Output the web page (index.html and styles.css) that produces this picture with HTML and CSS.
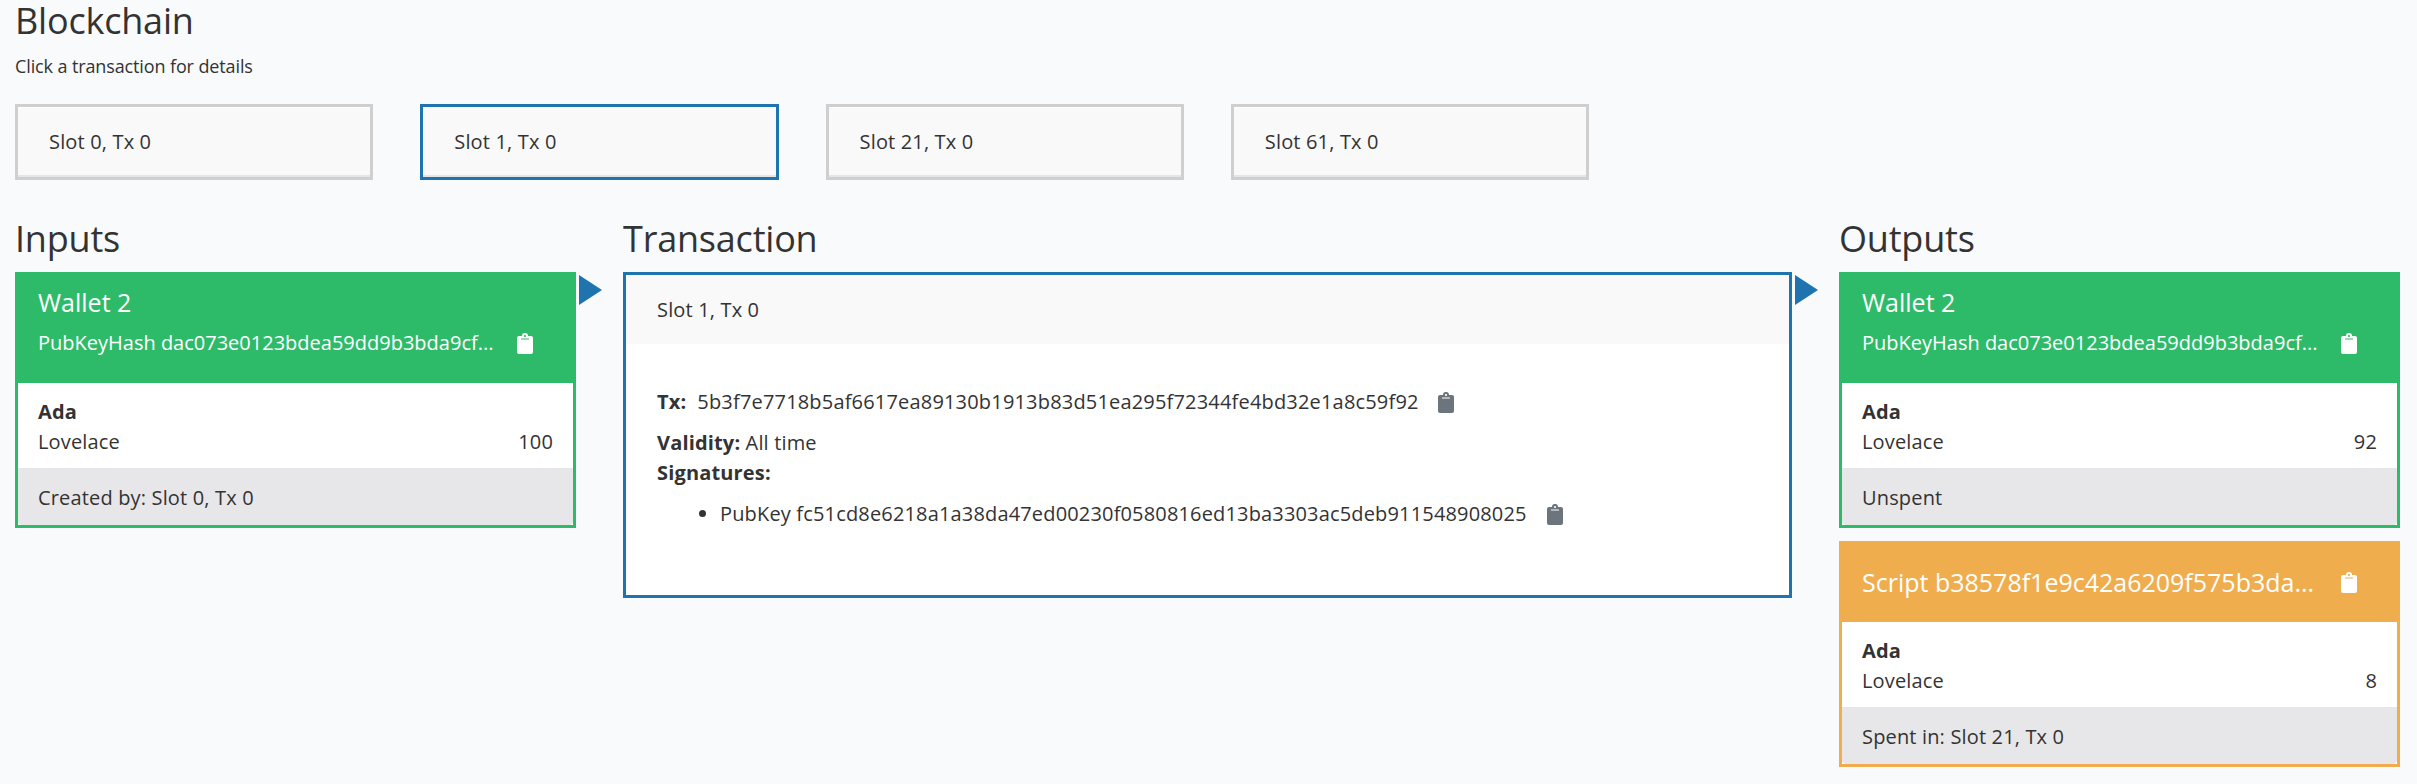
FILE: index.html
```html
<!DOCTYPE html>
<html lang="en">
<head>
<meta charset="utf-8">
<title>Blockchain</title>
<link rel="stylesheet" href="styles.css">
</head>
<body>
<svg class="defs" width="0" height="0"><symbol id="clip" viewBox="0 0 16 21"><path fill-rule="evenodd" d="M2 3H4.9A3.1 3.1 0 0 1 11.1 3H14A2 2 0 0 1 16 5V19A2 2 0 0 1 14 21H2A2 2 0 0 1 0 19V5A2 2 0 0 1 2 3ZM8 1.9A1.1 1.1 0 1 0 8 4.1A1.1 1.1 0 1 0 8 1.9ZM4 5.6V6.6H12V5.6Z"/></symbol></svg>
<main class="chain">
  <h2 class="title">Blockchain</h2>
  <p class="hint">Click a transaction for details</p>
  <div class="slots">
    <div class="slot">Slot 0, Tx 0</div>
    <div class="slot active">Slot 1, Tx 0</div>
    <div class="slot">Slot 21, Tx 0</div>
    <div class="slot">Slot 61, Tx 0</div>
  </div>
  <div class="detail">
    <section class="column">
      <h2 class="title">Inputs</h2>
      <div class="entry wallet">
        <div class="entry-head">
          <div class="name">Wallet 2</div>
          <div class="owner"><span class="hash">PubKeyHash dac073e0123bdea59dd9b3bda9cf...</span><svg class="clip"><use href="#clip"/></svg></div>
        </div>
        <div class="balance"><b>Ada</b><div class="amount"><span>Lovelace</span><span>100</span></div></div>
        <div class="entry-foot">Created by: Slot 0, Tx 0</div>
        <i class="arrow"></i>
      </div>
    </section>
    <section class="column">
      <h2 class="title">Transaction</h2>
      <div class="transaction">
        <div class="tx-head">Slot 1, Tx 0</div>
        <div class="tx-body">
          <div class="tx-id"><b>Tx:</b><span class="hash">5b3f7e7718b5af6617ea89130b1913b83d51ea295f72344fe4bd32e1a8c59f92</span><svg class="clip"><use href="#clip"/></svg></div>
          <div><b>Validity:</b> All time</div>
          <div><b>Signatures:</b></div>
          <ul class="signatures"><li><div class="key"><span class="hash">PubKey fc51cd8e6218a1a38da47ed00230f0580816ed13ba3303ac5deb911548908025</span><svg class="clip"><use href="#clip"/></svg></div></li></ul>
        </div>
        <i class="arrow"></i>
      </div>
    </section>
    <section class="column">
      <h2 class="title">Outputs</h2>
      <div class="entry wallet">
        <div class="entry-head">
          <div class="name">Wallet 2</div>
          <div class="owner"><span class="hash">PubKeyHash dac073e0123bdea59dd9b3bda9cf...</span><svg class="clip"><use href="#clip"/></svg></div>
        </div>
        <div class="balance"><b>Ada</b><div class="amount"><span>Lovelace</span><span>92</span></div></div>
        <div class="entry-foot">Unspent</div>
      </div>
      <div class="entry script">
        <div class="entry-head">
          <div class="owner"><span class="hash name">Script b38578f1e9c42a6209f575b3da...</span><svg class="clip"><use href="#clip"/></svg></div>
        </div>
        <div class="balance"><b>Ada</b><div class="amount"><span>Lovelace</span><span>8</span></div></div>
        <div class="entry-foot">Spent in: Slot 21, Tx 0</div>
      </div>
    </section>
  </div>
</main>
</body>
</html>
```
FILE: styles.css
```css
* { box-sizing: border-box; }
body {
  margin: 0;
  background: #f8fafc;
  color: #333;
  font: 20px/30px "Open Sans", sans-serif;
  letter-spacing: .16px;
}
.defs { display: block; }
.chain { padding: 1px 17px 0 15px; }
.title { margin: 0; font-size: 36px; line-height: 40px; font-weight: 400; letter-spacing: -.2px; }
.hint { margin: 12px 0 24px; font-size: 18px; line-height: 27px; letter-spacing: -.12px; }
.slots { display: grid; grid-template-columns: repeat(4, 358.45px); gap: 46.85px; }
.slot {
  height: 76px;
  padding: 20px 31px 0;
  border: 3px solid #cfcfcf;
  background: #f9f9f9;
  box-shadow: inset 0 1px #fff, inset 0 -2px #e5e5e5;
}
.slot.active { border-color: #1f73ae; }
.detail { display: grid; grid-template-columns: 561px 1169px 561px; gap: 47px; margin-top: 39px; }
.column .title { padding-bottom: 13px; height: 53px; }
.entry, .transaction { position: relative; border: 3px solid; background: #fff; }
.wallet { border-color: #2ebb69; }
.script { border-color: #f0ad4e; margin-top: 13px; }
.entry-head { padding: 0 20px; color: #fff; letter-spacing: 0; }
.wallet .entry-head { height: 108px; padding-top: 8px; background: #2ebb69; }
.script .entry-head { height: 78px; padding-top: 19px; background: #f0ad4e; }
.name { font-size: 25px; line-height: 38px; }
.wallet .owner { padding-top: 7px; }
.owner, .key, .tx-id { display: flex; align-items: center; }
.owner .clip { margin-left: 24px; }
.script .clip { margin-left: 27px; }
.clip { width: 16px; height: 21px; margin-left: 20px; fill: #6c757d; flex: none; }
.entry .clip { fill: #fff; }
.balance { height: 85px; padding: 14px 20px 0; }
.balance b { display: block; }
.amount { display: flex; justify-content: space-between; }
.entry-foot { height: 57px; padding: 15px 20px 0; background: #e7e7e9; border-radius: 0 0 4px 4px; }
.transaction { height: 326px; border-color: #1f73ae; }
.tx-head { height: 69px; padding: 20px 31px 0; background: #f9f9f9; }
.tx-body { padding: 43px 31px 0; }
.tx-id { gap: 11px; margin-bottom: 11px; }
.tx-id .hash { letter-spacing: .18px; }
.tx-id .clip { margin-left: 8px; }
.signatures { margin: 11px 0 0; padding-left: 63px; }
.arrow {
  position: absolute;
  left: calc(100% + 6px);
  top: 0;
  border: solid transparent;
  border-width: 15.5px 0 15.5px 23px;
  border-left-color: #1f73ae;
}
```
